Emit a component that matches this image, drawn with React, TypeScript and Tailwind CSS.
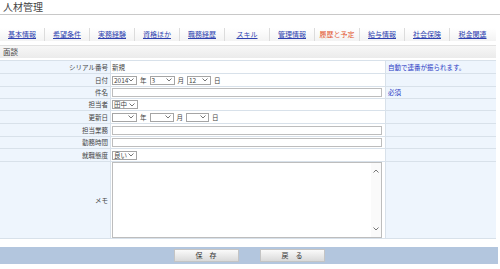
import { ReactNode } from "react";

const tabs = [
  "基本情報",
  "希望条件",
  "実務経験",
  "資格ほか",
  "職務経歴",
  "スキル",
  "管理情報",
  "履歴と予定",
  "給与情報",
  "社会保険",
  "税金関連",
];

function Chevron({ up = false }: { up?: boolean }) {
  return (
    <svg width="6" height="4" viewBox="0 0 6 4" className="shrink-0">
      <path
        d={up ? "M0.5 3.5 L3 1 L5.5 3.5" : "M0.5 0.5 L3 3 L5.5 0.5"}
        fill="none"
        stroke="#666"
        strokeWidth="0.9"
      />
    </svg>
  );
}

function FakeSelect({ value, width }: { value: string; width: string }) {
  return (
    <div
      className={`flex h-[9px] items-center justify-between border border-[#a5a5a5] bg-white pl-[1px] pr-[2px] ${width}`}
    >
      <span className="leading-none">{value}</span>
      <Chevron />
    </div>
  );
}

function Row({
  label,
  height,
  children,
  note,
}: {
  label: string;
  height: string;
  children?: ReactNode;
  note?: string;
}) {
  return (
    <div className={`grid grid-cols-[111px_275px_110px] border-b border-[#d8e1ea] ${height}`}>
      <div className="flex items-center justify-end border-r border-[#d8e1ea] bg-[#eef5fd] pr-[2px]">
        {label}
      </div>
      <div className="flex items-center gap-[3px] border-r border-[#d8e1ea] bg-white pl-[1px]">
        {children}
      </div>
      <div className="flex items-center bg-[#eef5fd] pl-[2px] text-[#2a3bc4]">{note}</div>
    </div>
  );
}

export default function App() {
  return (
    <div
      className="h-[269px] w-[500px] bg-white text-[#444]"
      style={{ fontFamily: '"Noto Sans CJK JP", "Noto Sans", sans-serif' }}
    >
      <div className="flex h-[15px] items-center border-b border-[#c8c8c8] pl-[3px] text-[10px] leading-none">
        人材管理
      </div>

      <div className="mt-[13px] flex h-[13px] w-[496px] bg-gradient-to-b from-white to-[#f3f3f3] text-[7px] leading-none">
        {tabs.map((t, i) => (
          <div
            key={t}
            className={`flex w-[45px] items-center justify-center ${
              i < tabs.length - 1 ? "border-r border-[#dcdcdc]" : ""
            }`}
          >
            <span
              className={
                i === 7 ? "text-[#e2542c]" : "text-[#2d3fb0] underline underline-offset-1"
              }
            >
              {t}
            </span>
          </div>
        ))}
      </div>

      <div className="mt-[4px] flex h-[13px] w-[496px] items-center border-t border-[#e2e2e2] bg-gradient-to-b from-[#f7f7f7] to-[#ebebeb] pl-[3px] text-[7.5px] leading-none">
        面談
      </div>

      <div className="mt-[2px] w-[496px] border-t border-[#d8e1ea] text-[6.5px] leading-none">
        <Row label="シリアル番号" height="h-[13px]" note="自動で連番が振られます。">
          新規
        </Row>
        <Row label="日付" height="h-[13px]">
          <FakeSelect value="2014" width="w-[25px]" />
          <span>年</span>
          <FakeSelect value="3" width="w-[25px]" />
          <span>月</span>
          <FakeSelect value="12" width="w-[24px]" />
          <span>日</span>
        </Row>
        <Row label="件名" height="h-[12px]" note="必須">
          <div className="h-[9px] w-[270px] border border-[#bdbdbd] bg-white" />
        </Row>
        <Row label="担当者" height="h-[12px]">
          <FakeSelect value="田中" width="w-[26px]" />
        </Row>
        <Row label="更新日" height="h-[13px]">
          <FakeSelect value="" width="w-[25px]" />
          <span>年</span>
          <FakeSelect value="" width="w-[24px]" />
          <span>月</span>
          <FakeSelect value="" width="w-[23px]" />
          <span>日</span>
        </Row>
        <Row label="担当業務" height="h-[13px]">
          <div className="h-[9px] w-[270px] border border-[#bdbdbd] bg-white" />
        </Row>
        <Row label="勤務時間" height="h-[12px]">
          <div className="h-[9px] w-[270px] border border-[#bdbdbd] bg-white" />
        </Row>
        <Row label="就職態度" height="h-[13px]">
          <FakeSelect value="良い" width="w-[25px]" />
        </Row>
        <div className="grid h-[77px] grid-cols-[111px_275px_110px] border-b border-[#d8e1ea]">
          <div className="flex items-center justify-end border-r border-[#d8e1ea] bg-[#eef5fd] pr-[2px]">
            メモ
          </div>
          <div className="flex border-r border-[#d8e1ea] bg-white pl-[1px]">
            <div className="flex h-full w-[270px] border border-[#bdbdbd] bg-white">
              <div className="flex-1" />
              <div className="flex w-[10px] flex-col items-center justify-between bg-[#fafafa] py-[6px]">
                <Chevron up />
                <Chevron />
              </div>
            </div>
          </div>
          <div className="bg-[#eef5fd]" />
        </div>
      </div>

      <div className="mt-[8px] flex h-[17px] w-[498px] items-center justify-center gap-[21px] bg-[#b3c6de]">
        <button className="flex h-[13px] w-[65px] items-center justify-center border border-[#c4c4c4] bg-gradient-to-b from-[#fafafa] to-[#dadada] text-[7px] leading-none text-[#333]">
          保　存
        </button>
        <button className="flex h-[13px] w-[65px] items-center justify-center border border-[#c4c4c4] bg-gradient-to-b from-[#fafafa] to-[#dadada] text-[7px] leading-none text-[#333]">
          戻　る
        </button>
      </div>
    </div>
  );
}
